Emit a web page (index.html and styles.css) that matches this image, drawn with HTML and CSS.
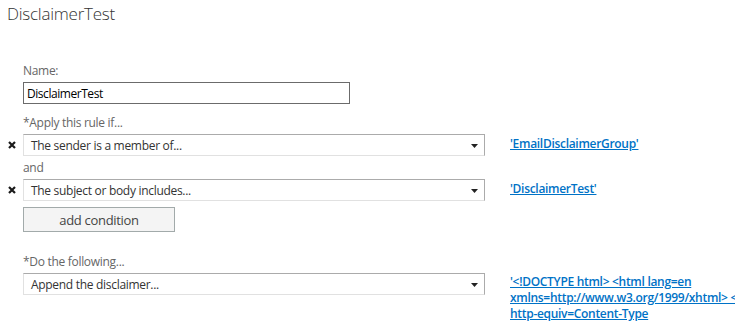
FILE: index.html
```html
<!DOCTYPE html>
<html lang="en">
<head>
  <meta charset="UTF-8" />
  <title>DisclaimerTest</title>
  <link rel="stylesheet" href="styles.css">
</head>
<body>

  <h1 class="page-title">DisclaimerTest</h1>

  <form class="rule-form">
    <div class="field">
      <label class="field-label" for="ruleName">Name:</label>
      <input type="text" id="ruleName" class="text-input" value="DisclaimerTest" />
    </div>

    <div class="section">
      <div class="field-label">*Apply this rule if...</div>
      <div class="rule-row">
        <span class="remove" title="Remove">
          <svg width="8" height="8" viewBox="0 0 8 8"><path d="M1 1 L7 7 M7 1 L1 7" stroke="#1a1a1a" stroke-width="2.2" /></svg>
        </span>
        <div class="dropdown">
          <span>The sender is a member of...</span>
          <svg class="caret" width="7" height="4" viewBox="0 0 7 4"><polygon points="0,0 7,0 3.5,4" fill="#222" /></svg>
        </div>
        <a href="#" class="value-link">'EmailDisclaimerGroup'</a>
      </div>

      <div class="field-label joiner">and</div>
      <div class="rule-row">
        <span class="remove" title="Remove">
          <svg width="8" height="8" viewBox="0 0 8 8"><path d="M1 1 L7 7 M7 1 L1 7" stroke="#1a1a1a" stroke-width="2.2" /></svg>
        </span>
        <div class="dropdown">
          <span>The subject or body includes...</span>
          <svg class="caret" width="7" height="4" viewBox="0 0 7 4"><polygon points="0,0 7,0 3.5,4" fill="#222" /></svg>
        </div>
        <a href="#" class="value-link">'DisclaimerTest'</a>
      </div>

      <button type="button" class="add-btn">add condition</button>
    </div>

    <div class="section actions">
      <div class="field-label">*Do the following...</div>
      <div class="rule-row">
        <span class="remove"></span>
        <div class="dropdown">
          <span>Append the disclaimer...</span>
          <svg class="caret" width="7" height="4" viewBox="0 0 7 4"><polygon points="0,0 7,0 3.5,4" fill="#222" /></svg>
        </div>
        <a href="#" class="value-link multi">'&lt;!DOCTYPE html&gt; &lt;html lang=en xmlns=http://www.w3.org/1999/xhtml&gt; &lt;head&gt; &lt;meta http-equiv=Content-Type content=text/html;charset=utf-8&gt;'</a>
      </div>
    </div>
  </form>

</body>
</html>
```

FILE: styles.css
```css
html, body {
  overflow: hidden;
}
body {
  margin: 0;
  background: #fff;
  font-family: "Open Sans", "Noto Sans", sans-serif;
  font-size: 12px;
  line-height: 16px;
  letter-spacing: -0.3px;
  color: #333;
}
.page-title {
  margin: 0;
  padding: 1px 0 0 7px;
  font-size: 17px;
  font-weight: 300;
  line-height: 26px;
  letter-spacing: -0.25px;
  color: #333;
}
.rule-form {
  padding-top: 36px;
}
.field,
.section {
  padding-left: 23px;
}
.field-label {
  display: block;
  color: #666;
  margin-bottom: 3px;
}
.text-input {
  display: block;
  box-sizing: border-box;
  width: 327px;
  height: 22px;
  margin: 0;
  padding: 0 3px;
  border: 1px solid #6b6b6b;
  font-family: inherit;
  font-size: 12px;
  letter-spacing: -0.45px;
  color: #000;
}
.section {
  margin-top: 11px;
}
.rule-row {
  display: flex;
  align-items: flex-start;
  margin-left: -23px;
  width: 900px;
}
.remove {
  width: 23px;
  height: 22px;
  display: flex;
  align-items: center;
  justify-content: center;
  flex-shrink: 0;
}
.dropdown {
  box-sizing: border-box;
  width: 462px;
  height: 22px;
  flex-shrink: 0;
  display: flex;
  align-items: center;
  justify-content: space-between;
  padding: 1px 6px 0 7px;
  border: 1px solid;
  border-color: #ababab #ababab #e1e1e1 #e1e1e1;
  color: #333;
}
.caret {
  display: block;
}
.value-link {
  margin-left: 25px;
  padding-top: 2px;
  color: #0072c6;
  font-weight: 600;
  text-decoration: underline;
}
.value-link.multi {
  width: 310px;
  flex-shrink: 0;
  padding-top: 1px;
}
.joiner {
  margin-top: 4px;
}
.add-btn {
  display: block;
  box-sizing: border-box;
  width: 152px;
  height: 25px;
  margin-top: 6px;
  border: 1px solid #a2aaaa;
  background: #f4f4f4;
  font-family: inherit;
  font-size: 13px;
  letter-spacing: -0.3px;
  color: #444;
  padding: 0;
}
.actions {
  margin-top: 22px;
}
```
